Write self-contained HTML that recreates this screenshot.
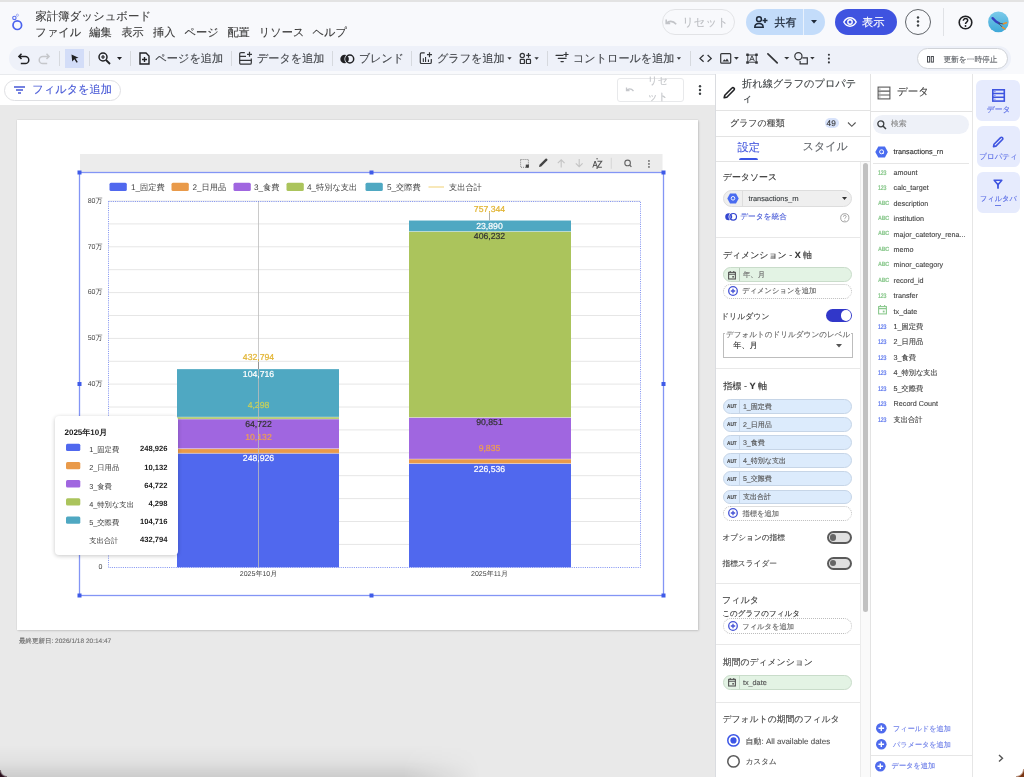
<!DOCTYPE html>
<html><head><meta charset="utf-8"><style>
*{box-sizing:border-box;margin:0;padding:0}
body{width:1024px;height:777px;overflow:hidden;position:relative;font-family:"Liberation Sans",sans-serif;text-rendering:geometricPrecision;background:#f8f9fc;color:#3c4043}
.a{position:absolute;white-space:nowrap;line-height:1;-webkit-text-stroke:0.12px currentColor}
svg{position:absolute;overflow:visible}
.dv{position:absolute;width:1px;background:#d6d9de}
</style></head><body><div id="root" style="position:absolute;left:0;top:0;width:1024px;height:777px;overflow:hidden;will-change:transform">
<!-- top strip -->
<div class="a" style="left:0;top:0;width:1024px;height:2px;background:#e3e3e3"></div>

<!-- HEADER -->
<svg style="left:10px;top:12px" width="16" height="20" viewBox="0 0 16 20">
  <circle cx="7.3" cy="13.2" r="4.3" fill="none" stroke="#4b63ee" stroke-width="1.7"/>
  <circle cx="4.4" cy="5.9" r="1.7" fill="none" stroke="#5a70ef" stroke-width="1.1"/>
  <circle cx="7.4" cy="3.2" r="1.1" fill="none" stroke="#9aa8f3" stroke-width="0.9"/>
</svg>
<div class="a" style="left:35.4px;top:12.10px;font-size:11.42px;color:#3a3a3a;-webkit-text-stroke:0.12px #3a3a3a">家計簿ダッシュボード</div>
<div class="a" style="left:35.3px;top:28.30px;font-size:11.2px;color:#3a3a3a;-webkit-text-stroke:0.12px #3a3a3a">ファイル</div>
<div class="a" style="left:89.2px;top:28.30px;font-size:11.2px;color:#3a3a3a;-webkit-text-stroke:0.12px #3a3a3a">編集</div>
<div class="a" style="left:121.4px;top:28.30px;font-size:11.2px;color:#3a3a3a;-webkit-text-stroke:0.12px #3a3a3a">表示</div>
<div class="a" style="left:153.1px;top:28.30px;font-size:11.2px;color:#3a3a3a;-webkit-text-stroke:0.12px #3a3a3a">挿入</div>
<div class="a" style="left:184.6px;top:28.30px;font-size:11.2px;color:#3a3a3a;-webkit-text-stroke:0.12px #3a3a3a">ページ</div>
<div class="a" style="left:227.4px;top:28.30px;font-size:11.2px;color:#3a3a3a;-webkit-text-stroke:0.12px #3a3a3a">配置</div>
<div class="a" style="left:258.8px;top:28.30px;font-size:11.2px;color:#3a3a3a;-webkit-text-stroke:0.12px #3a3a3a">リソース</div>
<div class="a" style="left:312.6px;top:28.30px;font-size:11.2px;color:#3a3a3a;-webkit-text-stroke:0.12px #3a3a3a">ヘルプ</div>

<!-- header right -->
<div class="a" style="left:662px;top:9px;width:73px;height:26px;border:1px solid #e2e3e6;border-radius:13px"></div>
<svg style="left:665px;top:17.5px" width="13" height="10" viewBox="0 0 13 10"><path d="M1.2 1.5v4h4M1.6 5.3C3.5 2.8 7.8 2.3 11.2 6.2" fill="none" stroke="#c2c4c8" stroke-width="1.6"/></svg>
<div class="a" style="left:682.3px;top:17.70px;font-size:11.3px;color:#bdbfc3">リセット</div>

<div class="a" style="left:746px;top:9px;width:79px;height:26px;background:#c3dcfa;border-radius:13px"></div>
<div class="a" style="left:803px;top:9px;width:1px;height:26px;background:#e8f1fd"></div>
<svg style="left:754px;top:16px" width="14" height="12" viewBox="0 0 14 12"><circle cx="5" cy="3.2" r="2.4" fill="none" stroke="#1f2a3a" stroke-width="1.5"/><path d="M0.8 11.2c0-2.6 2-3.8 4.2-3.8s4.2 1.2 4.2 3.8z" fill="none" stroke="#1f2a3a" stroke-width="1.5"/><path d="M11 2v5M8.5 4.5h5" stroke="#1f2a3a" stroke-width="1.5"/></svg>
<div class="a" style="left:774.5px;top:17.70px;font-size:11px;color:#1f2a3a;-webkit-text-stroke:0.25px #1f2a3a">共有</div>
<svg style="left:811px;top:20px" width="6" height="4" viewBox="0 0 6 4"><path d="M0 0h6L3 3.5z" fill="#1f2a3a"/></svg>

<div class="a" style="left:835px;top:9px;width:62px;height:26px;background:#3f53e0;border-radius:13px"></div>
<svg style="left:843px;top:17px" width="14" height="10" viewBox="0 0 14 10"><path d="M0.8 5C2.5 1.8 4.8 0.8 7 0.8S11.5 1.8 13.2 5C11.5 8.2 9.2 9.2 7 9.2S2.5 8.2 0.8 5z" fill="none" stroke="#fff" stroke-width="1.4"/><circle cx="7" cy="5" r="2.2" fill="none" stroke="#fff" stroke-width="1.4"/></svg>
<div class="a" style="left:861.9px;top:17.70px;font-size:11.3px;color:#fff">表示</div>

<div class="a" style="left:905px;top:9px;width:26px;height:26px;border:1px solid #5f6368;border-radius:50%"></div>
<svg style="left:916px;top:16px" width="4" height="12" viewBox="0 0 4 12"><circle cx="2" cy="1.5" r="1.2" fill="#3c4043"/><circle cx="2" cy="5.5" r="1.2" fill="#3c4043"/><circle cx="2" cy="9.5" r="1.2" fill="#3c4043"/></svg>
<div class="a" style="left:943px;top:8px;width:1px;height:28px;background:#e0e2e6"></div>
<svg style="left:958px;top:15px" width="15" height="15" viewBox="0 0 15 15"><circle cx="7.5" cy="7.5" r="6.3" fill="none" stroke="#202124" stroke-width="1.6"/><path d="M5.3 5.8c0-1.3 1-2.2 2.2-2.2s2.2.9 2.2 2c0 1.6-2.2 1.6-2.2 3.4" fill="none" stroke="#202124" stroke-width="1.5"/><circle cx="7.5" cy="11" r="0.9" fill="#202124"/></svg>
<svg style="left:987px;top:11px" width="22" height="22" viewBox="0 0 22 22"><defs><linearGradient id="av" x1="0" y1="0" x2="0" y2="1"><stop offset="0" stop-color="#7ccbea"/><stop offset="1" stop-color="#3ea8d8"/></linearGradient></defs><circle cx="11.4" cy="10.9" r="10.3" fill="url(#av)"/><path d="M5.6 7.2L9 10.5 12 12.2" fill="none" stroke="#3340c0" stroke-width="2.4" stroke-linecap="round"/><path d="M11.5 12L16.5 13M11.5 12.3L15.5 16.3" fill="none" stroke="#40506a" stroke-width="1"/><path d="M16.5 12.8L19.5 11.8M15.5 16.3L17.8 17.8" fill="none" stroke="#e8902a" stroke-width="1.6" stroke-linecap="round"/></svg>

<!-- TOOLBAR -->
<div class="a" style="left:9px;top:46px;width:1002px;height:25px;background:#eef1f9;border-radius:13px"></div>
<svg style="left:18px;top:53px" width="12" height="11" viewBox="0 0 12 11"><path d="M3.5 0.8L0.9 3.4 3.5 6M1 3.4h6.2a3.6 3.6 0 0 1 0 7.2H2.8" fill="none" stroke="#202124" stroke-width="1.5"/></svg>
<svg style="left:38px;top:53px" width="12" height="11" viewBox="0 0 12 11"><path d="M8.5 0.8L11.1 3.4 8.5 6M11 3.4H4.8a3.6 3.6 0 0 0 0 7.2H9.2" fill="none" stroke="#c5c7cb" stroke-width="1.5"/></svg>
<div class="dv" style="left:59px;top:51px;height:15px"></div>
<div class="a" style="left:65px;top:49px;width:19px;height:19px;background:#d3ddf8"></div>
<svg style="left:71px;top:54px" width="8" height="9" viewBox="0 0 8 9"><path d="M0.5 0.5L7.5 3.8 4.6 4.6 6.8 8 5.6 8.7 3.4 5.3 1.2 7.5z" fill="#202124"/></svg>
<div class="dv" style="left:89px;top:51px;height:15px"></div>
<svg style="left:98px;top:52px" width="13" height="13" viewBox="0 0 13 13"><circle cx="5" cy="5" r="4" fill="none" stroke="#202124" stroke-width="1.5"/><path d="M8 8l4 4" stroke="#202124" stroke-width="1.8"/><path d="M5 3v4M3 5h4" stroke="#202124" stroke-width="1.2"/></svg>
<svg style="left:117px;top:57px" width="5" height="3" viewBox="0 0 5 3"><path d="M0 0h5L2.5 3z" fill="#202124"/></svg>
<div class="dv" style="left:130px;top:51px;height:15px"></div>
<svg style="left:139px;top:52px" width="11" height="13" viewBox="0 0 11 13"><path d="M1 1h6l3 3v8H1z" fill="none" stroke="#202124" stroke-width="1.4"/><path d="M5.5 5v5M3 7.5h5" stroke="#202124" stroke-width="1.4"/></svg>
<div class="a" style="left:155.3px;top:54.10px;font-size:11.2px;color:#44474c;-webkit-text-stroke:0.15px #44474c">ページを追加</div>
<div class="dv" style="left:231px;top:51px;height:15px"></div>
<div class="a" style="left:257px;top:54.10px;font-size:11.1px;color:#44474c;-webkit-text-stroke:0.15px #44474c">データを追加</div>
<div class="dv" style="left:332px;top:51px;height:15px"></div>
<svg style="left:340px;top:54px" width="15" height="10" viewBox="0 0 15 10"><circle cx="4.6" cy="5" r="4.3" fill="#202124"/><circle cx="9.8" cy="5" r="4.6" fill="none" stroke="#eef1f9" stroke-width="1.6"/><circle cx="9.8" cy="5" r="3.9" fill="none" stroke="#202124" stroke-width="1.5"/></svg>
<div class="a" style="left:359px;top:54.10px;font-size:11px;color:#44474c;-webkit-text-stroke:0.15px #44474c">ブレンド</div>
<div class="dv" style="left:411px;top:51px;height:15px"></div>
<div class="a" style="left:437px;top:54.10px;font-size:11.1px;color:#44474c;-webkit-text-stroke:0.15px #44474c">グラフを追加</div>
<div class="dv" style="left:547px;top:51px;height:15px"></div>
<div class="a" style="left:573px;top:54.10px;font-size:11.1px;color:#44474c;-webkit-text-stroke:0.15px #44474c">コントロールを追加</div>
<div class="dv" style="left:690px;top:51px;height:15px"></div>
<div class="a" style="left:917px;top:48px;width:91px;height:21px;background:#fff;border:1px solid #d0d3d8;border-radius:11px"></div>
<svg style="left:927px;top:56px" width="7" height="7" viewBox="0 0 7 7"><rect x="0.5" y="0.5" width="2.1" height="5.6" fill="none" stroke="#4a4d52" stroke-width="1"/><rect x="4.3" y="0.5" width="2.1" height="5.6" fill="none" stroke="#4a4d52" stroke-width="1"/></svg>
<div class="a" style="left:943.4px;top:55.7px;font-size:7.71px;color:#5f6368">更新を一時停止</div>

<svg style="left:0;top:0" width="1024" height="80" viewBox="0 0 1024 80">
<g fill="none" stroke="#333538" stroke-width="1.2">
<path d="M244.8 52.6H241a1.3 1.3 0 0 0-1.3 1.3V62.9a1.3 1.3 0 0 0 1.3 1.3H250a1.3 1.3 0 0 0 1.3-1.3V58.4"/>
<path d="M239.7 56.4H246M239.7 60.4H251.3M249.5 51.8V56.8M247 54.3H252"/>
<path d="M424.7 52.9H421.6a1.3 1.3 0 0 0-1.3 1.3V62.2a1.3 1.3 0 0 0 1.3 1.3H430a1.3 1.3 0 0 0 1.3-1.3V59"/>
<path d="M429.5 52.2V57.2M427 54.7H432"/>
<circle cx="522.3" cy="55.4" r="2.1"/>
<rect x="520.3" y="59.4" width="4.1" height="4.1" rx="0.6"/>
<rect x="526.4" y="59.4" width="4.1" height="4.1" rx="0.6"/>
<path d="M528.5 53.1V57.7M526.2 55.4H530.8"/>
<path d="M556 55.3H563M558.3 58.4H566M561 61.6H563.3M566 52.4V56.6M563.9 54.5H568.1" stroke-linecap="round"/>
<path d="M703.6 55L700 58.4 703.6 61.8M707.6 55L711.2 58.4 707.6 61.8" stroke-width="1.3"/>
<rect x="720.7" y="53.6" width="10" height="9.6" rx="1"/>
<rect x="747.8" y="55" width="8.4" height="7.2" stroke-width="0.9"/>
<path d="M749.6 61.2L752 55.8 754.4 61.2M750.4 59.4H753.6" stroke-width="0.9"/>
<path d="M767.9 53.9L777.2 62.9" stroke-width="1.7" stroke-linecap="round"/>
<circle cx="798.4" cy="56.3" r="3.6"/>
<path d="M802.3 57.8H807.3V63.8H800.1V61"/>
</g>
<g fill="#333538">
<path d="M422.8 62V58.3h1.1V62zM425 62V56.9h1.1V62zM427.9 62V59.4h1.1V62z"/>
<path d="M722.5 61.5L724.3 59.2 725.5 60.4 727 58.6 729 61.5z"/>
<rect x="746.2" y="53.4" width="2.6" height="2.6" rx="0.5"/><rect x="755.2" y="53.4" width="2.6" height="2.6" rx="0.5"/>
<rect x="746.2" y="61.2" width="2.6" height="2.6" rx="0.5"/><rect x="755.2" y="61.2" width="2.6" height="2.6" rx="0.5"/>
<circle cx="828.9" cy="54.8" r="1.05"/><circle cx="828.9" cy="58.6" r="1.05"/><circle cx="828.9" cy="62.4" r="1.05"/>
<path d="M507.4 57.2h4.2l-2.1 2.5z"/>
<path d="M534.4 57.2h4.4l-2.2 2.6z"/>
<path d="M676.8 57.2h4.2l-2.1 2.5z"/>
<path d="M734 57.1h4.8l-2.4 2.6z"/>
<path d="M784.2 57h5.1l-2.55 2.5z"/>
<path d="M810.2 57h4.4l-2.2 2.5z"/>
</g>
</svg>
<!-- FILTER BAR -->
<div class="a" style="left:0;top:74px;width:715px;height:31px;background:#fff;border-top:1px solid #e8eaed"></div>
<div class="a" style="left:4px;top:80px;width:116.5px;height:20.5px;border:1px solid #dfe0e3;border-radius:11px;background:#fff"></div>
<svg style="left:14px;top:86px" width="11" height="8" viewBox="0 0 11 8"><path d="M0 1h11M2 4h7M4 7h3" stroke="#4758d6" stroke-width="1.5"/></svg>
<div class="a" style="left:32.3px;top:85.20px;font-size:11.2px;color:#4758d6">フィルタを追加</div>
<div class="a" style="left:617px;top:78.2px;width:67.3px;height:23.5px;border:1px solid #e8e9eb;border-radius:3px"></div>
<svg style="left:625px;top:87px" width="10" height="7" viewBox="0 0 10 7"><path d="M1.5 0.5v3h3M1.8 3.5C3 1.5 6 1 8.5 4" fill="none" stroke="#c5c7cb" stroke-width="1.3"/></svg>
<div class="a" style="left:647.5px;top:73.6px;font-size:10px;color:#c5c7cb;line-height:16px;width:21px;white-space:normal">リセ<br>ット</div>
<svg style="left:698px;top:85px" width="4" height="10" viewBox="0 0 4 10"><circle cx="2" cy="1.3" r="1.2" fill="#3c4043"/><circle cx="2" cy="5" r="1.2" fill="#3c4043"/><circle cx="2" cy="8.7" r="1.2" fill="#3c4043"/></svg>

<!-- CANVAS -->
<div class="a" style="left:0;top:105px;width:716px;height:672px;background:#e9e9e9"></div>
<div class="a" style="left:17px;top:119.5px;width:681px;height:510.3px;background:#fff;box-shadow:0 0 1.5px rgba(0,0,0,0.14),0.5px 1px 2px rgba(0,0,0,0.12)"></div>
<div class="a" style="left:18.9px;top:638.70px;font-size:6.52px;color:#6f6f6f">最終更新日: 2026/1/18 20:14:47</div>

<!-- CHART -->
<div id="chart"><svg style="left:0;top:0" width="1024" height="777" viewBox="0 0 1024 777">
<rect x="80" y="154" width="582.5" height="18" fill="#ececec"/>
<line x1="108.5" x2="640.5" y1="544.4" y2="544.4" stroke="#e6e6e6" stroke-width="1"/>
<line x1="108.5" x2="640.5" y1="521.5" y2="521.5" stroke="#e6e6e6" stroke-width="1"/>
<line x1="108.5" x2="640.5" y1="498.6" y2="498.6" stroke="#e6e6e6" stroke-width="1"/>
<line x1="108.5" x2="640.5" y1="475.7" y2="475.7" stroke="#e6e6e6" stroke-width="1"/>
<line x1="108.5" x2="640.5" y1="452.8" y2="452.8" stroke="#e6e6e6" stroke-width="1"/>
<line x1="108.5" x2="640.5" y1="429.9" y2="429.9" stroke="#e6e6e6" stroke-width="1"/>
<line x1="108.5" x2="640.5" y1="407.0" y2="407.0" stroke="#e6e6e6" stroke-width="1"/>
<line x1="108.5" x2="640.5" y1="384.1" y2="384.1" stroke="#e6e6e6" stroke-width="1"/>
<line x1="108.5" x2="640.5" y1="361.3" y2="361.3" stroke="#e6e6e6" stroke-width="1"/>
<line x1="108.5" x2="640.5" y1="338.4" y2="338.4" stroke="#e6e6e6" stroke-width="1"/>
<line x1="108.5" x2="640.5" y1="315.5" y2="315.5" stroke="#e6e6e6" stroke-width="1"/>
<line x1="108.5" x2="640.5" y1="292.6" y2="292.6" stroke="#e6e6e6" stroke-width="1"/>
<line x1="108.5" x2="640.5" y1="269.7" y2="269.7" stroke="#e6e6e6" stroke-width="1"/>
<line x1="108.5" x2="640.5" y1="246.8" y2="246.8" stroke="#e6e6e6" stroke-width="1"/>
<line x1="108.5" x2="640.5" y1="223.9" y2="223.9" stroke="#e6e6e6" stroke-width="1"/>
<line x1="108.5" x2="640.5" y1="201.0" y2="201.0" stroke="#e6e6e6" stroke-width="1"/>
<text x="102.5" y="569.0" text-anchor="end" font-size="7" fill="#444">0</text>
<text x="102.5" y="523.2" text-anchor="end" font-size="7" fill="#444">10万</text>
<text x="102.5" y="477.4" text-anchor="end" font-size="7" fill="#444">20万</text>
<text x="102.5" y="431.6" text-anchor="end" font-size="7" fill="#444">30万</text>
<text x="102.5" y="385.8" text-anchor="end" font-size="7" fill="#444">40万</text>
<text x="102.5" y="340.1" text-anchor="end" font-size="7" fill="#444">50万</text>
<text x="102.5" y="294.3" text-anchor="end" font-size="7" fill="#444">60万</text>
<text x="102.5" y="248.5" text-anchor="end" font-size="7" fill="#444">70万</text>
<text x="102.5" y="202.7" text-anchor="end" font-size="7" fill="#444">80万</text>
<rect x="177" y="453.32" width="162" height="113.98" fill="#5068ee"/>
<rect x="177" y="448.68" width="162" height="4.64" fill="#e99a4a"/>
<rect x="177" y="419.05" width="162" height="29.63" fill="#a066e0"/>
<rect x="177" y="417.08" width="162" height="1.97" fill="#abc45c"/>
<rect x="177" y="369.13" width="162" height="47.95" fill="#4fa8c2"/>
<rect x="409" y="463.57" width="162" height="103.73" fill="#5068ee"/>
<rect x="409" y="459.07" width="162" height="4.50" fill="#e99a4a"/>
<rect x="409" y="417.47" width="162" height="41.60" fill="#a066e0"/>
<rect x="409" y="231.47" width="162" height="186.00" fill="#abc45c"/>
<rect x="409" y="220.53" width="162" height="10.94" fill="#4fa8c2"/>
<line x1="177" x2="339" y1="453.32" y2="453.32" stroke="#fff" stroke-opacity="0.55" stroke-width="0.7"/>
<line x1="177" x2="339" y1="448.68" y2="448.68" stroke="#fff" stroke-opacity="0.55" stroke-width="0.7"/>
<line x1="177" x2="339" y1="419.05" y2="419.05" stroke="#fff" stroke-opacity="0.55" stroke-width="0.7"/>
<line x1="177" x2="339" y1="417.08" y2="417.08" stroke="#fff" stroke-opacity="0.55" stroke-width="0.7"/>
<line x1="409" x2="571" y1="463.57" y2="463.57" stroke="#fff" stroke-opacity="0.55" stroke-width="0.7"/>
<line x1="409" x2="571" y1="459.07" y2="459.07" stroke="#fff" stroke-opacity="0.55" stroke-width="0.7"/>
<line x1="409" x2="571" y1="417.47" y2="417.47" stroke="#fff" stroke-opacity="0.55" stroke-width="0.7"/>
<line x1="409" x2="571" y1="231.47" y2="231.47" stroke="#fff" stroke-opacity="0.55" stroke-width="0.7"/>
<line x1="258.5" x2="258.5" y1="201" y2="567.3" stroke="#bdbdbd" stroke-width="1" opacity="0.8"/>
<line x1="489.5" x2="489.5" y1="213" y2="220.5" stroke="#999" stroke-width="0.8"/>
<line x1="258.5" x2="258.5" y1="362" y2="369.1" stroke="#888" stroke-width="0.8"/>
<text x="258.5" y="360.2" text-anchor="middle" font-size="8.7" fill="#e2b432" stroke="#e2b432" stroke-width="0.2">432,794</text>
<text x="258.5" y="377.2" text-anchor="middle" font-size="8.7" fill="#ffffff" stroke="#ffffff" stroke-width="0.2">104,716</text>
<text x="258.5" y="408.2" text-anchor="middle" font-size="8.7" fill="#c8d05a" stroke="#c8d05a" stroke-width="0.2">4,298</text>
<text x="258.5" y="427.2" text-anchor="middle" font-size="8.7" fill="#333333" stroke="#333333" stroke-width="0.2">64,722</text>
<text x="258.5" y="440.2" text-anchor="middle" font-size="8.7" fill="#ef9f50" stroke="#ef9f50" stroke-width="0.2">10,132</text>
<text x="258.5" y="460.7" text-anchor="middle" font-size="8.7" fill="#ffffff" stroke="#ffffff" stroke-width="0.2">248,926</text>
<text x="489.5" y="211.8" text-anchor="middle" font-size="8.7" fill="#e2b432" stroke="#e2b432" stroke-width="0.2">757,344</text>
<text x="489.5" y="228.7" text-anchor="middle" font-size="8.7" fill="#ffffff" stroke="#ffffff" stroke-width="0.2">23,890</text>
<text x="489.5" y="239.2" text-anchor="middle" font-size="8.7" fill="#333333" stroke="#333333" stroke-width="0.2">406,232</text>
<text x="489.5" y="425.3" text-anchor="middle" font-size="8.7" fill="#333333" stroke="#333333" stroke-width="0.2">90,851</text>
<text x="489.5" y="450.6" text-anchor="middle" font-size="8.7" fill="#ef9f50" stroke="#ef9f50" stroke-width="0.2">9,835</text>
<text x="489.5" y="471.5" text-anchor="middle" font-size="8.7" fill="#ffffff" stroke="#ffffff" stroke-width="0.2">226,536</text>
<text x="258.5" y="576.3" text-anchor="middle" font-size="7" fill="#444">2025年10月</text>
<text x="489.5" y="576.3" text-anchor="middle" font-size="7" fill="#444">2025年11月</text>
<rect x="108.5" y="201.5" width="532" height="366" fill="none" stroke="#6f83f0" stroke-width="0.9" stroke-dasharray="1 1.2"/>
<rect x="79.5" y="172.5" width="584" height="423" fill="none" stroke="#8395f5" stroke-width="1.3"/>
<rect x="77.5" y="170.5" width="4" height="4" fill="#3f5be8"/>
<rect x="369.5" y="170.5" width="4" height="4" fill="#3f5be8"/>
<rect x="661.5" y="170.5" width="4" height="4" fill="#3f5be8"/>
<rect x="77.5" y="382" width="4" height="4" fill="#3f5be8"/>
<rect x="661.5" y="382" width="4" height="4" fill="#3f5be8"/>
<rect x="77.5" y="593.5" width="4" height="4" fill="#3f5be8"/>
<rect x="369.5" y="593.5" width="4" height="4" fill="#3f5be8"/>
<rect x="661.5" y="593.5" width="4" height="4" fill="#3f5be8"/>
<rect x="109.5" y="182.7" width="17.3" height="8.3" rx="1.5" fill="#5068ee"/>
<text x="131" y="190" font-size="8.2" fill="#444">1_固定費</text>
<rect x="171.5" y="182.7" width="17.3" height="8.3" rx="1.5" fill="#e99a4a"/>
<text x="192.5" y="190" font-size="8.2" fill="#444">2_日用品</text>
<rect x="233.5" y="182.7" width="17.3" height="8.3" rx="1.5" fill="#a066e0"/>
<text x="254" y="190" font-size="8.2" fill="#444">3_食費</text>
<rect x="286.5" y="182.7" width="17.3" height="8.3" rx="1.5" fill="#abc45c"/>
<text x="307" y="190" font-size="8.2" fill="#444">4_特別な支出</text>
<rect x="365.5" y="182.7" width="17.3" height="8.3" rx="1.5" fill="#4fa8c2"/>
<text x="387" y="190" font-size="8.2" fill="#444">5_交際費</text>
<line x1="428.5" x2="444" y1="187" y2="187" stroke="#f3d98a" stroke-width="1.2"/>
<text x="449" y="190" font-size="8.2" fill="#444">支出合計</text>
</svg></div>

<svg style="left:0;top:0" width="1024" height="777" viewBox="0 0 1024 777">
<rect x="520.6" y="159.5" width="7.8" height="7.8" fill="none" stroke="#777" stroke-width="0.9" stroke-dasharray="1 1"/>
<rect x="525.8" y="164.6" width="3.1" height="3.1" fill="#444"/>
<path d="M539 167l0.5-2.2 6-6a1 1 0 0 1 1.4 0l0.3 0.3a1 1 0 0 1 0 1.4l-6 6z" fill="#444"/>
<path d="M561.2 167.5v-7.5M557.8 163.2l3.4-3.4 3.4 3.4" fill="none" stroke="#c4c4c4" stroke-width="1.1"/>
<path d="M579.2 159v7.5M575.8 163.3l3.4 3.4 3.4-3.4" fill="none" stroke="#c4c4c4" stroke-width="1.1"/>
<path d="M592.8 167.5l2.3-6.5 2.3 6.5M593.6 165.4h3" fill="none" stroke="#555" stroke-width="1"/>
<path d="M597.5 161.2h4.2l-4.2 6h4.4" fill="none" stroke="#555" stroke-width="1.1"/>
<path d="M596.3 158.8h1.6M596.3 168.2h1.6" stroke="#555" stroke-width="1"/>
<line x1="611.3" x2="611.3" y1="157.8" y2="168.7" stroke="#d4d4d4" stroke-width="0.9"/>
<circle cx="627.6" cy="162.9" r="2.8" fill="none" stroke="#666" stroke-width="1.1"/>
<path d="M629.6 165l1.8 1.8" stroke="#666" stroke-width="1.2"/>
<rect x="648.2" y="160.2" width="1.5" height="1.5" fill="#555"/><rect x="648.2" y="163.2" width="1.5" height="1.5" fill="#555"/><rect x="648.2" y="166.2" width="1.5" height="1.5" fill="#555"/>
</svg>
<!-- TOOLTIP -->
<div class="a" style="left:55px;top:416px;width:122.5px;height:139px;background:#fff;border-radius:4px;box-shadow:0 1px 4px rgba(0,0,0,0.22)"></div>
<svg style="left:0;top:0" width="1024" height="777" viewBox="0 0 1024 777">
<text x="64.5" y="435.3" font-size="8" font-weight="bold" fill="#222">2025年10月</text>
<rect x="66" y="443.8" width="14.3" height="7.3" rx="1.5" fill="#5068ee"/>
<text x="89.2" y="452.3" font-size="7.3" fill="#383838">1_固定費</text>
<text x="167.5" y="451.4" text-anchor="end" font-size="7.6" font-weight="bold" fill="#222">248,926</text>
<rect x="66" y="461.9" width="14.3" height="7.3" rx="1.5" fill="#e99a4a"/>
<text x="89.2" y="470.4" font-size="7.3" fill="#383838">2_日用品</text>
<text x="167.5" y="469.6" text-anchor="end" font-size="7.6" font-weight="bold" fill="#222">10,132</text>
<rect x="66" y="480.1" width="14.3" height="7.3" rx="1.5" fill="#a066e0"/>
<text x="89.2" y="488.6" font-size="7.3" fill="#383838">3_食費</text>
<text x="167.5" y="487.7" text-anchor="end" font-size="7.6" font-weight="bold" fill="#222">64,722</text>
<rect x="66" y="498.2" width="14.3" height="7.3" rx="1.5" fill="#abc45c"/>
<text x="89.2" y="506.8" font-size="7.3" fill="#383838">4_特別な支出</text>
<text x="167.5" y="505.9" text-anchor="end" font-size="7.6" font-weight="bold" fill="#222">4,298</text>
<rect x="66" y="516.4" width="14.3" height="7.3" rx="1.5" fill="#4fa8c2"/>
<text x="89.2" y="524.9" font-size="7.3" fill="#383838">5_交際費</text>
<text x="167.5" y="524.0" text-anchor="end" font-size="7.6" font-weight="bold" fill="#222">104,716</text>
<text x="89.2" y="543.0" font-size="7.3" fill="#383838">支出合計</text>
<text x="167.5" y="542.1" text-anchor="end" font-size="7.6" font-weight="bold" fill="#222">432,794</text>
</svg>

<!-- PROPERTY PANEL -->
<div class="a" style="left:715px;top:74px;width:1px;height:703px;background:#dadce0"></div>
<div class="a" style="left:716px;top:74px;width:154px;height:703px;background:#fff"></div>

<!-- DATA PANEL -->
<div class="a" style="left:870px;top:74px;width:1px;height:703px;background:#e3e3e3"></div>
<div class="a" style="left:871px;top:74px;width:102px;height:703px;background:#fff"></div>
<div class="a" style="left:972px;top:74px;width:1px;height:703px;background:#e6e6e6"></div>
<div class="a" style="left:973px;top:74px;width:51px;height:703px;background:#fff"></div>

<div class="a" style="left:0;top:745px;width:480px;height:32px;background:linear-gradient(to bottom,rgba(0,0,0,0),rgba(0,0,0,0.03) 50%,rgba(0,0,0,0.12));-webkit-mask-image:linear-gradient(to right,#000 84%,transparent 100%)"></div>
<div class="a" style="left:0;top:770px;width:7px;height:7px;background:radial-gradient(circle at 100% 0,rgba(42,15,28,0) 5.5px,#2a0f1c 7.5px)"></div>
<div class="a" style="left:1016px;top:769px;width:8px;height:8px;background:radial-gradient(circle at 0 0,rgba(122,53,18,0) 6.5px,#7a3512 8.5px)"></div>
<!-- PANELS-START -->
<svg style="left:722px;top:86px" width="14" height="14" viewBox="0 0 14 14"><path d="M2.2 11.8l0.6-2.6 7.2-7.2a1.3 1.3 0 0 1 1.9 0l0.1 0.1a1.3 1.3 0 0 1 0 1.9L4.8 11.2z" fill="none" stroke="#202124" stroke-width="1.6" stroke-linejoin="round"/></svg>
<div class="a" style="left:742.1px;top:80.4px;font-size:10.19px;color:#3c4043;">折れ線グラフのプロパテ</div>
<div class="a" style="left:742.1px;top:95.4px;font-size:10.19px;color:#3c4043;">ィ</div>
<div class="a" style="left:716px;top:110px;width:154.00px;height:1.00px;background:#e3e3e3"></div>
<div class="a" style="left:730px;top:119.1px;font-size:8.97px;color:#444;">グラフの種類</div>
<div class="a" style="left:824.7px;top:118.2px;width:14.10px;height:10.10px;background:#d8e3fb;border-radius:5px"></div>
<div class="a" style="left:826.6px;top:119.7px;font-size:8.2px;color:#333;">49</div>
<svg style="left:847px;top:121px" width="10" height="7" viewBox="0 0 10 7"><path d="M1 1.5l3.8 3.8 3.8-3.8" fill="none" stroke="#555" stroke-width="1.1"/></svg>
<div class="a" style="left:716px;top:136px;width:154.00px;height:1.00px;background:#e3e3e3"></div>
<div class="a" style="left:737.6px;top:142.9px;font-size:11.2px;color:#4a5ddf;">設定</div>
<div class="a" style="left:802.7px;top:141.8px;font-size:11.06px;color:#5f6368;">スタイル</div>
<div class="a" style="left:738.5px;top:157.8px;width:19.80px;height:2.70px;background:#3b55e6;border-radius:2px 2px 0 0"></div>
<div class="a" style="left:716px;top:160.5px;width:154.00px;height:1.00px;background:#e3e3e3"></div>
<div class="a" style="left:860px;top:161.5px;width:1.00px;height:615.50px;background:#ececec"></div>
<div class="a" style="left:861px;top:161.5px;width:9.00px;height:615.50px;background:#fafafa"></div>
<div class="a" style="left:862.5px;top:163px;width:5.50px;height:448.60px;background:#c1c1c1;border-radius:3px"></div>
<div class="a" style="left:722.8px;top:172.5px;font-size:8.91px;color:#333;">データソース</div>
<div class="a" style="left:723px;top:189.5px;width:129.00px;height:17.10px;background:#efefef;border:1px solid #dddddd;border-radius:9px"></div>
<div class="a" style="left:742.2px;top:190.5px;width:1.00px;height:15.10px;background:#dddddd"></div>
<svg style="left:727px;top:193px" width="12" height="11" viewBox="0 0 12 11"><path d="M3 0.5h6l2.7 5-2.7 5H3L0.3 5.5z" fill="#4a6cf0"/><circle cx="6" cy="5.3" r="1.8" fill="none" stroke="#fff" stroke-width="0.9"/></svg>
<div class="a" style="left:748.5px;top:194.9px;font-size:7.35px;color:#3c4043;">transactions_rn</div>
<svg style="left:841.5px;top:197px" width="5" height="3" viewBox="0 0 5 3"><path d="M0 0h5L2.5 3z" fill="#333"/></svg>
<svg style="left:725px;top:213px" width="13" height="8" viewBox="0 0 13 8"><circle cx="3.7" cy="3.8" r="3.5" fill="#3446d0"/><circle cx="8.2" cy="3.8" r="3.6" fill="none" stroke="#fff" stroke-width="2.2"/><circle cx="8.2" cy="3.8" r="3.3" fill="none" stroke="#3446d0" stroke-width="1.2"/></svg>
<div class="a" style="left:740.2px;top:213.3px;font-size:7.7px;color:#4a5cd8;">データを統合</div>
<svg style="left:839.8px;top:212.6px" width="10" height="10" viewBox="0 0 10 10"><circle cx="4.8" cy="4.8" r="4.1" fill="none" stroke="#9a9a9a" stroke-width="0.9"/><path d="M3.4 3.7c0-0.8 0.6-1.4 1.4-1.4s1.4 0.6 1.4 1.3c0 1-1.4 1-1.4 2.1" fill="none" stroke="#9a9a9a" stroke-width="0.9"/><circle cx="4.8" cy="7.2" r="0.5" fill="#9a9a9a"/></svg>
<div class="a" style="left:716px;top:237px;width:144.00px;height:1.00px;background:#e8e8e8"></div>
<div class="a" style="left:722.9px;top:250.9px;font-size:8.92px;color:#333;">ディメンション - <b>X</b> 軸</div>
<div class="a" style="left:723px;top:267.1px;width:129.30px;height:14.70px;background:#e3f3e4;border:1px solid #c9dcca;border-radius:8px"></div>
<div class="a" style="left:739.3px;top:268.1px;width:1.00px;height:12.70px;background:#b9ccba"></div>
<svg style="left:727.5px;top:270.8px" width="8" height="8.6" viewBox="0 0 8 8.6"><rect x="0.6" y="1.4" width="6.8" height="6.6" fill="none" stroke="#555" stroke-width="1.1"/><path d="M0.6 3.2h6.8M2.2 0v1.6M5.8 0v1.6" stroke="#555" stroke-width="1.1"/><rect x="4.3" y="5" width="1.6" height="1.6" fill="#555"/></svg>
<div class="a" style="left:743px;top:271.1px;font-size:7.36px;color:#6f6f6f;">年、月</div>
<div class="a" style="left:723px;top:284px;width:129.00px;height:15.00px;border:1px dotted #bdbdbd;border-radius:8px"></div>
<svg style="left:727.5px;top:286.4px" width="10" height="10" viewBox="0 0 10 10"><circle cx="5" cy="5" r="4.3" fill="none" stroke="#4553d6" stroke-width="1.3"/><path d="M5 2.8v4.4M2.8 5h4.4" stroke="#4553d6" stroke-width="1.3"/></svg>
<div class="a" style="left:742.2px;top:287.3px;font-size:7.29px;color:#666;">ディメンションを追加</div>
<div class="a" style="left:721px;top:312.9px;font-size:7.9px;color:#444;">ドリルダウン</div>
<div class="a" style="left:826.3px;top:309px;width:26.00px;height:13.20px;background:#3137c9;border-radius:7px"></div>
<div class="a" style="left:840.6px;top:310.4px;width:10.6px;height:10.6px;background:#fff;border-radius:50%"></div>
<div class="a" style="left:723px;top:333.2px;width:129.60px;height:24.50px;border:1px solid #bdbdbd;border-top:none"></div>
<div class="a" style="left:723px;top:333.2px;width:2.00px;height:1.00px;background:#bdbdbd"></div>
<div class="a" style="left:850.6px;top:333.2px;width:2.00px;height:1.00px;background:#bdbdbd"></div>
<div class="a" style="left:725.9px;top:330.6px;font-size:7.6px;color:#666;">デフォルトのドリルダウンのレベル</div>
<div class="a" style="left:733.3px;top:342.2px;font-size:8.16px;color:#333;">年、月</div>
<svg style="left:835.9px;top:344px" width="6" height="4" viewBox="0 0 6 4"><path d="M0 0h6L3 3.5z" fill="#555"/></svg>
<div class="a" style="left:716px;top:368px;width:144.00px;height:1.00px;background:#e8e8e8"></div>
<div class="a" style="left:723.2px;top:382.1px;font-size:9.12px;color:#333;">指標 - <b>Y</b> 軸</div>
<div class="a" style="left:723.2px;top:399.0px;width:128.70px;height:14.80px;background:#dcebfc;border:1px solid #c6d5e7;border-radius:8px"></div>
<div class="a" style="left:739.3px;top:400.0px;width:1.00px;height:12.80px;background:#c6d5e7"></div>
<div class="a" style="left:726.6px;top:405.3px;font-size:5.6px;font-weight:bold;color:#444;transform:scaleX(0.85);transform-origin:left">AUT</div>
<div class="a" style="left:742.9px;top:403.8px;font-size:7.05px;color:#555;">1_固定費</div>
<div class="a" style="left:723.2px;top:417.1px;width:128.70px;height:14.80px;background:#dcebfc;border:1px solid #c6d5e7;border-radius:8px"></div>
<div class="a" style="left:739.3px;top:418.1px;width:1.00px;height:12.80px;background:#c6d5e7"></div>
<div class="a" style="left:726.6px;top:423.4px;font-size:5.6px;font-weight:bold;color:#444;transform:scaleX(0.85);transform-origin:left">AUT</div>
<div class="a" style="left:742.9px;top:421.9px;font-size:7.05px;color:#555;">2_日用品</div>
<div class="a" style="left:723.2px;top:435.2px;width:128.70px;height:14.80px;background:#dcebfc;border:1px solid #c6d5e7;border-radius:8px"></div>
<div class="a" style="left:739.3px;top:436.2px;width:1.00px;height:12.80px;background:#c6d5e7"></div>
<div class="a" style="left:726.6px;top:441.5px;font-size:5.6px;font-weight:bold;color:#444;transform:scaleX(0.85);transform-origin:left">AUT</div>
<div class="a" style="left:742.9px;top:440.0px;font-size:7.05px;color:#555;">3_食費</div>
<div class="a" style="left:723.2px;top:453.3px;width:128.70px;height:14.80px;background:#dcebfc;border:1px solid #c6d5e7;border-radius:8px"></div>
<div class="a" style="left:739.3px;top:454.3px;width:1.00px;height:12.80px;background:#c6d5e7"></div>
<div class="a" style="left:726.6px;top:459.6px;font-size:5.6px;font-weight:bold;color:#444;transform:scaleX(0.85);transform-origin:left">AUT</div>
<div class="a" style="left:742.9px;top:458.1px;font-size:7.05px;color:#555;">4_特別な支出</div>
<div class="a" style="left:723.2px;top:471.4px;width:128.70px;height:14.80px;background:#dcebfc;border:1px solid #c6d5e7;border-radius:8px"></div>
<div class="a" style="left:739.3px;top:472.4px;width:1.00px;height:12.80px;background:#c6d5e7"></div>
<div class="a" style="left:726.6px;top:477.7px;font-size:5.6px;font-weight:bold;color:#444;transform:scaleX(0.85);transform-origin:left">AUT</div>
<div class="a" style="left:742.9px;top:476.2px;font-size:7.05px;color:#555;">5_交際費</div>
<div class="a" style="left:723.2px;top:489.5px;width:128.70px;height:14.80px;background:#dcebfc;border:1px solid #c6d5e7;border-radius:8px"></div>
<div class="a" style="left:739.3px;top:490.5px;width:1.00px;height:12.80px;background:#c6d5e7"></div>
<div class="a" style="left:726.6px;top:495.8px;font-size:5.6px;font-weight:bold;color:#444;transform:scaleX(0.85);transform-origin:left">AUT</div>
<div class="a" style="left:742.9px;top:494.3px;font-size:7.05px;color:#555;">支出合計</div>
<div class="a" style="left:723px;top:506px;width:129.00px;height:15.00px;border:1px dotted #bdbdbd;border-radius:8px"></div>
<svg style="left:727.5px;top:508px" width="10" height="10" viewBox="0 0 10 10"><circle cx="5" cy="5" r="4.3" fill="none" stroke="#4553d6" stroke-width="1.3"/><path d="M5 2.8v4.4M2.8 5h4.4" stroke="#4553d6" stroke-width="1.3"/></svg>
<div class="a" style="left:742.5px;top:509.7px;font-size:7.3px;color:#666;">指標を追加</div>
<div class="a" style="left:722.5px;top:534.4px;font-size:7.68px;color:#444;">オプションの指標</div>
<div class="a" style="left:826.6px;top:531.2px;width:25.40px;height:12.70px;background:#e0e0e0;border:2px solid #5a5a5a;border-radius:7px"></div>
<div class="a" style="left:830.1px;top:534.4px;width:6.3px;height:6.3px;background:#666;border-radius:50%"></div>
<div class="a" style="left:826.6px;top:557px;width:25.40px;height:12.60px;background:#e0e0e0;border:2px solid #5a5a5a;border-radius:7px"></div>
<div class="a" style="left:830.1px;top:560.2px;width:6.3px;height:6.3px;background:#666;border-radius:50%"></div>
<div class="a" style="left:722.5px;top:559.9px;font-size:7.68px;color:#444;">指標スライダー</div>
<div class="a" style="left:716px;top:583px;width:144.00px;height:1.00px;background:#e8e8e8"></div>
<div class="a" style="left:722px;top:595.8px;font-size:9.05px;color:#444;">フィルタ</div>
<div class="a" style="left:722.2px;top:609.5px;font-size:7.62px;color:#333;">このグラフのフィルタ</div>
<div class="a" style="left:723px;top:618px;width:129.00px;height:16.00px;border:1px dotted #bdbdbd;border-radius:8px"></div>
<svg style="left:727.5px;top:621.1px" width="10" height="10" viewBox="0 0 10 10"><circle cx="5" cy="5" r="4.3" fill="none" stroke="#4553d6" stroke-width="1.3"/><path d="M5 2.8v4.4M2.8 5h4.4" stroke="#4553d6" stroke-width="1.3"/></svg>
<div class="a" style="left:742.2px;top:622.5px;font-size:7.3px;color:#666;">フィルタを追加</div>
<div class="a" style="left:716px;top:644px;width:144.00px;height:1.00px;background:#e8e8e8"></div>
<div class="a" style="left:722.8px;top:657.8px;font-size:8.83px;color:#444;">期間のディメンション</div>
<div class="a" style="left:723px;top:674.8px;width:129.00px;height:15.00px;background:#e3f3e4;border:1px solid #c9dcca;border-radius:8px"></div>
<div class="a" style="left:739.2px;top:675.8px;width:1.00px;height:13.00px;background:#c9dcca"></div>
<svg style="left:727.5px;top:678.3px" width="8" height="8.6" viewBox="0 0 8 8.6"><rect x="0.6" y="1.4" width="6.8" height="6.6" fill="none" stroke="#555" stroke-width="1.1"/><path d="M0.6 3.2h6.8M2.2 0v1.6M5.8 0v1.6" stroke="#555" stroke-width="1.1"/><rect x="4.3" y="5" width="1.6" height="1.6" fill="#555"/></svg>
<div class="a" style="left:742.9px;top:678.7px;font-size:7.28px;color:#555;">tx_date</div>
<div class="a" style="left:716px;top:702.4px;width:144.00px;height:1.00px;background:#e8e8e8"></div>
<div class="a" style="left:722.5px;top:715.2px;font-size:8.84px;color:#444;">デフォルトの期間のフィルタ</div>
<svg style="left:726.6px;top:734.4px" width="13" height="13" viewBox="0 0 13 13"><circle cx="6.5" cy="6.4" r="5.7" fill="none" stroke="#3b55e6" stroke-width="1.5"/><circle cx="6.5" cy="6.4" r="3.1" fill="#3b55e6"/></svg>
<div class="a" style="left:745.5px;top:738.0px;font-size:7.99px;color:#555;">自動: All available dates</div>
<svg style="left:726.6px;top:755.2px" width="13" height="13" viewBox="0 0 13 13"><circle cx="6.5" cy="6.4" r="5.7" fill="none" stroke="#5a5a5a" stroke-width="1.5"/></svg>
<div class="a" style="left:745.8px;top:757.5px;font-size:7.56px;color:#555;">カスタム</div>
<svg style="left:876.5px;top:85.5px" width="14" height="14" viewBox="0 0 14 14"><rect x="1.1" y="1.1" width="11.8" height="11.8" fill="none" stroke="#5a5a5a" stroke-width="1.1"/><path d="M1.1 5.1h11.8M1.1 9h11.8" stroke="#5a5a5a" stroke-width="1.1"/><path d="M2.4 3.1h1M2.4 7h1M2.4 11h1" stroke="#5a5a5a" stroke-width="0.9"/></svg>
<div class="a" style="left:897px;top:86.9px;font-size:10.5px;color:#444;">データ</div>
<div class="a" style="left:871px;top:110.5px;width:101.00px;height:1.00px;background:#e3e3e3"></div>
<div class="a" style="left:873.1px;top:114.6px;width:95.50px;height:19.00px;background:#eef1f8;border-radius:10px"></div>
<svg style="left:876.7px;top:119.8px" width="10" height="10" viewBox="0 0 10 10"><circle cx="3.8" cy="3.8" r="3" fill="none" stroke="#3c4043" stroke-width="1.3"/><path d="M6 6l3 3" stroke="#3c4043" stroke-width="1.5"/></svg>
<div class="a" style="left:890.9px;top:120.0px;font-size:7.82px;color:#8a8a8a;">検索</div>
<svg style="left:875.2px;top:145.9px" width="13.2" height="12" viewBox="0 0 13.2 12"><path d="M3.3 0.5h6.6l3 5.5-3 5.5H3.3L0.3 6z" fill="#4a6cf0"/><circle cx="6.6" cy="5.8" r="2" fill="none" stroke="#fff" stroke-width="1"/><path d="M7.6 6.8l1 1" stroke="#fff" stroke-width="1"/></svg>
<div class="a" style="left:893.6px;top:148.0px;font-size:7.25px;color:#333;">transactions_rn</div>
<div class="a" style="left:873px;top:163px;width:96.00px;height:1.00px;background:#e6e6e6"></div>
<div class="a" style="left:877.8px;top:170.9px;font-size:6.9px;font-weight:bold;color:#8cc98f;transform:scaleX(0.78);transform-origin:left;letter-spacing:-0.3px">123</div>
<div class="a" style="left:893.6px;top:168.9px;font-size:7.2px;color:#444;">amount</div>
<div class="a" style="left:877.8px;top:186.3px;font-size:6.9px;font-weight:bold;color:#8cc98f;transform:scaleX(0.78);transform-origin:left;letter-spacing:-0.3px">123</div>
<div class="a" style="left:893.6px;top:184.3px;font-size:7.2px;color:#444;">calc_target</div>
<div class="a" style="left:877.8px;top:200.5px;font-size:6px;font-weight:bold;color:#8cc98f;letter-spacing:-0.3px;transform:scaleX(0.9);transform-origin:left">ABC</div>
<div class="a" style="left:893.6px;top:199.7px;font-size:7.2px;color:#444;">description</div>
<div class="a" style="left:877.8px;top:215.9px;font-size:6px;font-weight:bold;color:#8cc98f;letter-spacing:-0.3px;transform:scaleX(0.9);transform-origin:left">ABC</div>
<div class="a" style="left:893.6px;top:215.1px;font-size:7.2px;color:#444;">institution</div>
<div class="a" style="left:877.8px;top:231.3px;font-size:6px;font-weight:bold;color:#8cc98f;letter-spacing:-0.3px;transform:scaleX(0.9);transform-origin:left">ABC</div>
<div class="a" style="left:893.6px;top:230.6px;font-size:7.2px;color:#444;">major_catetory_rena...</div>
<div class="a" style="left:877.8px;top:246.7px;font-size:6px;font-weight:bold;color:#8cc98f;letter-spacing:-0.3px;transform:scaleX(0.9);transform-origin:left">ABC</div>
<div class="a" style="left:893.6px;top:246.0px;font-size:7.2px;color:#444;">memo</div>
<div class="a" style="left:877.8px;top:262.2px;font-size:6px;font-weight:bold;color:#8cc98f;letter-spacing:-0.3px;transform:scaleX(0.9);transform-origin:left">ABC</div>
<div class="a" style="left:893.6px;top:261.4px;font-size:7.2px;color:#444;">minor_category</div>
<div class="a" style="left:877.8px;top:277.6px;font-size:6px;font-weight:bold;color:#8cc98f;letter-spacing:-0.3px;transform:scaleX(0.9);transform-origin:left">ABC</div>
<div class="a" style="left:893.6px;top:276.8px;font-size:7.2px;color:#444;">record_id</div>
<div class="a" style="left:877.8px;top:294.2px;font-size:6.9px;font-weight:bold;color:#8cc98f;transform:scaleX(0.78);transform-origin:left;letter-spacing:-0.3px">123</div>
<div class="a" style="left:893.6px;top:292.2px;font-size:7.2px;color:#444;">transfer</div>
<svg style="left:877.5px;top:304.78999999999996px" width="9" height="9.5" viewBox="0 0 9 9.5"><rect x="0.6" y="1.6" width="7.8" height="7.3" fill="none" stroke="#8cc98f" stroke-width="1.1"/><path d="M0.6 3.6h7.8M2.4 0v1.8M6.6 0v1.8" stroke="#8cc98f" stroke-width="1.1"/><rect x="4.8" y="5.6" width="1.8" height="1.8" fill="#8cc98f"/></svg>
<div class="a" style="left:893.6px;top:307.6px;font-size:7.2px;color:#444;">tx_date</div>
<div class="a" style="left:877.8px;top:325.0px;font-size:6.9px;font-weight:bold;color:#6f86ef;transform:scaleX(0.78);transform-origin:left;letter-spacing:-0.3px">123</div>
<div class="a" style="left:893.6px;top:323.0px;font-size:7.2px;color:#444;">1_固定費</div>
<div class="a" style="left:877.8px;top:340.4px;font-size:6.9px;font-weight:bold;color:#6f86ef;transform:scaleX(0.78);transform-origin:left;letter-spacing:-0.3px">123</div>
<div class="a" style="left:893.6px;top:338.4px;font-size:7.2px;color:#444;">2_日用品</div>
<div class="a" style="left:877.8px;top:355.8px;font-size:6.9px;font-weight:bold;color:#6f86ef;transform:scaleX(0.78);transform-origin:left;letter-spacing:-0.3px">123</div>
<div class="a" style="left:893.6px;top:353.8px;font-size:7.2px;color:#444;">3_食費</div>
<div class="a" style="left:877.8px;top:371.2px;font-size:6.9px;font-weight:bold;color:#6f86ef;transform:scaleX(0.78);transform-origin:left;letter-spacing:-0.3px">123</div>
<div class="a" style="left:893.6px;top:369.3px;font-size:7.2px;color:#444;">4_特別な支出</div>
<div class="a" style="left:877.8px;top:386.6px;font-size:6.9px;font-weight:bold;color:#6f86ef;transform:scaleX(0.78);transform-origin:left;letter-spacing:-0.3px">123</div>
<div class="a" style="left:893.6px;top:384.7px;font-size:7.2px;color:#444;">5_交際費</div>
<div class="a" style="left:877.8px;top:402.1px;font-size:6.9px;font-weight:bold;color:#6f86ef;transform:scaleX(0.78);transform-origin:left;letter-spacing:-0.3px">123</div>
<div class="a" style="left:893.6px;top:400.1px;font-size:7.2px;color:#444;">Record Count</div>
<div class="a" style="left:877.8px;top:417.5px;font-size:6.9px;font-weight:bold;color:#6f86ef;transform:scaleX(0.78);transform-origin:left;letter-spacing:-0.3px">123</div>
<div class="a" style="left:893.6px;top:415.5px;font-size:7.2px;color:#444;">支出合計</div>
<svg style="left:876.4px;top:723.4000000000001px" width="10.6" height="10.6" viewBox="0 0 10.6 10.6"><circle cx="5.3" cy="5.3" r="5.3" fill="#4f6bed"/><path d="M5.3 2.5v5.6M2.5 5.3h5.6" stroke="#fff" stroke-width="1.4"/></svg>
<div class="a" style="left:893.1px;top:725.6px;font-size:7.12px;color:#6c7ee8;">フィールドを追加</div>
<svg style="left:876.4px;top:739.4000000000001px" width="10.6" height="10.6" viewBox="0 0 10.6 10.6"><circle cx="5.3" cy="5.3" r="5.3" fill="#4f6bed"/><path d="M5.3 2.5v5.6M2.5 5.3h5.6" stroke="#fff" stroke-width="1.4"/></svg>
<div class="a" style="left:893.1px;top:741.6px;font-size:7.12px;color:#6c7ee8;">パラメータを追加</div>
<div class="a" style="left:871px;top:754.5px;width:101.00px;height:1.00px;background:#e6e6e6"></div>
<svg style="left:874.6px;top:760.7px" width="10.6" height="10.6" viewBox="0 0 10.6 10.6"><circle cx="5.3" cy="5.3" r="5.3" fill="#4f6bed"/><path d="M5.3 2.5v5.6M2.5 5.3h5.6" stroke="#fff" stroke-width="1.4"/></svg>
<div class="a" style="left:891.6px;top:763.3px;font-size:7.18px;color:#6c7ee8;">データを追加</div>
<div class="a" style="left:976.4px;top:80px;width:43.80px;height:40.80px;background:#e6ebfd;border-radius:6px"></div>
<svg style="left:991.9px;top:88.8px" width="13.1" height="12.9" viewBox="0 0 13.1 12.9"><rect x="0.8" y="0.8" width="11.5" height="11.3" fill="none" stroke="#3f55e0" stroke-width="1.6"/><path d="M0.8 4.5h11.5M0.8 8.3h11.5" stroke="#3f55e0" stroke-width="1.5"/><path d="M2.4 2.6h1M2.4 6.4h1M2.4 10.2h1" stroke="#3f55e0" stroke-width="1"/></svg>
<div class="a" style="left:986.8px;top:105.5px;font-size:7.81px;color:#5a6de6;">データ</div>
<div class="a" style="left:976.8px;top:126px;width:43.20px;height:40.60px;background:#e6ebfd;border-radius:6px"></div>
<svg style="left:991.5px;top:135.5px" width="13" height="12" viewBox="0 0 13 12"><path d="M1.5 10.6l0.5-2.4 6.6-6.6a1.2 1.2 0 0 1 1.7 0l0.2 0.2a1.2 1.2 0 0 1 0 1.7L3.9 10.1z" fill="none" stroke="#3f55e0" stroke-width="1.6" stroke-linejoin="round"/></svg>
<div class="a" style="left:979.3px;top:152.9px;font-size:7.5px;color:#5a6de6;">プロパティ</div>
<div class="a" style="left:976.8px;top:172.3px;width:43.20px;height:40.60px;background:#e6ebfd;border-radius:6px"></div>
<svg style="left:993.2px;top:178.8px" width="10" height="10.5" viewBox="0 0 10 10.5"><path d="M1.2 1.2h7.6L5 5.8z" fill="none" stroke="#3f55e0" stroke-width="1.6" stroke-linejoin="round"/><rect x="4.1" y="5" width="1.8" height="4.8" rx="0.6" fill="#3f55e0"/></svg>
<div class="a" style="left:980px;top:195.1px;font-size:7.2px;color:#5a6de6;">フィルタバ</div>
<div class="a" style="left:994.5px;top:204.6px;width:6.00px;height:1.00px;background:#6a7ce8"></div>
<svg style="left:997.8px;top:753.5px" width="6" height="8.5" viewBox="0 0 6 8.5"><path d="M1 1l3.5 3.3L1 7.6" fill="none" stroke="#555" stroke-width="1.4"/></svg>
<!-- PANELS-END -->
</div></body></html>
